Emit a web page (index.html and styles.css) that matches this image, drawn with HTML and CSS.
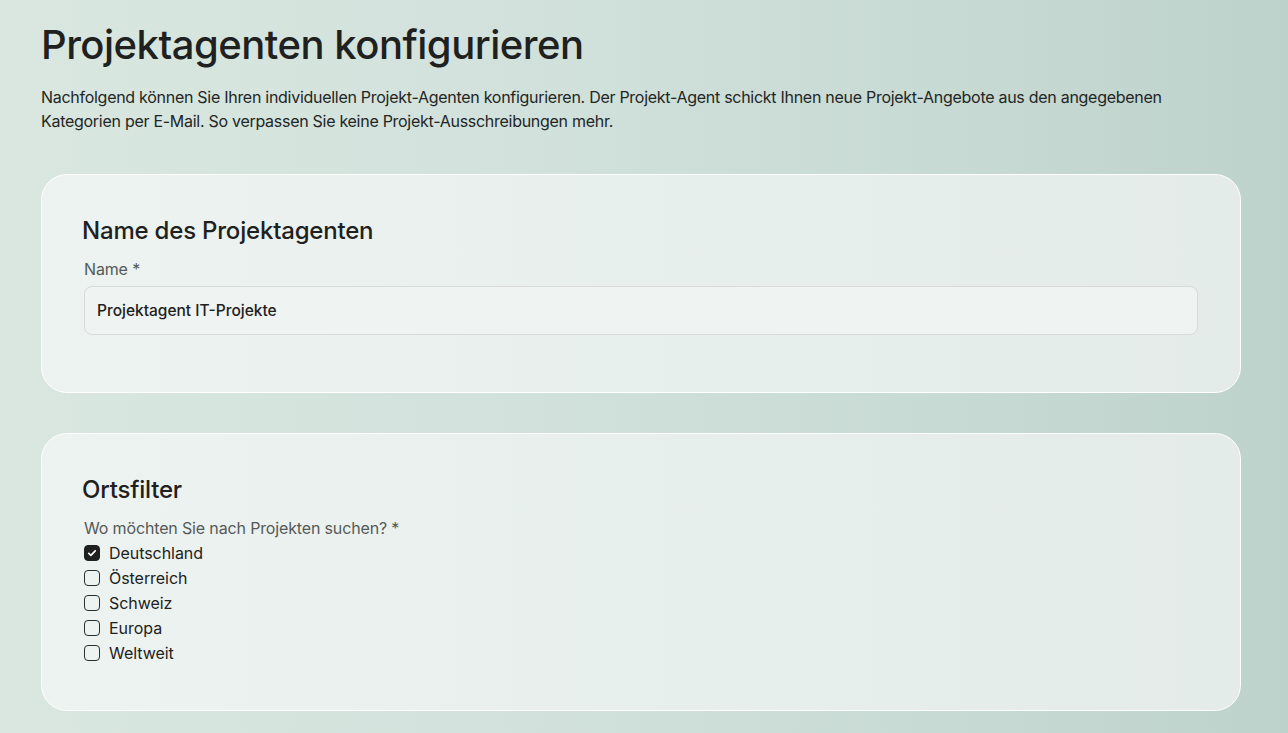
FILE: index.html
```html
<!DOCTYPE html>
<html lang="de">
<head>
<meta charset="utf-8">
<title>Projektagenten konfigurieren</title>
<link rel="stylesheet" href="styles.css">
</head>
<body>
<main class="page">
  <header class="intro">
    <h1 class="title">Projektagenten konfigurieren</h1>
    <p class="lead">Nachfolgend können Sie Ihren individuellen Projekt-Agenten konfigurieren. Der Projekt-Agent schickt Ihnen neue Projekt-Angebote aus den angegebenen Kategorien per E-Mail. So verpassen Sie keine Projekt-Ausschreibungen mehr.</p>
  </header>

  <section class="card card-name">
    <h2 class="card-title">Name des Projektagenten</h2>
    <label class="field-label" for="name">Name *</label>
    <input class="text-input" id="name" type="text" value="Projektagent IT-Projekte">
  </section>

  <section class="card card-place">
    <h2 class="card-title">Ortsfilter</h2>
    <div class="field-label">Wo möchten Sie nach Projekten suchen? *</div>
    <ul class="checks">
      <li class="check-row"><span class="box checked"><svg viewBox="0 0 16 16" width="16" height="16"><path d="M4.2 8.3l2.5 2.4 5-5.2" fill="none" stroke="#fff" stroke-width="1.9" stroke-linecap="round" stroke-linejoin="round"/></svg></span><span class="check-text">Deutschland</span></li>
      <li class="check-row"><span class="box"></span><span class="check-text">Österreich</span></li>
      <li class="check-row"><span class="box"></span><span class="check-text">Schweiz</span></li>
      <li class="check-row"><span class="box"></span><span class="check-text">Europa</span></li>
      <li class="check-row"><span class="box"></span><span class="check-text">Weltweit</span></li>
    </ul>
  </section>
</main>
</body>
</html>
```

FILE: styles.css
```css
* { box-sizing: border-box; }

html, body {
  margin: 0;
  padding: 0;
  height: 100%;
}

body {
  font-family: Inter, "Noto Sans", "Liberation Sans", sans-serif;
  color: #1f2321;
  background: linear-gradient(90deg, #dae7e1 0%, #d3e2dc 35%, #c9dbd5 70%, #bed2cc 100%);
  overflow: hidden;
}

.page {
  padding: 21px 48px 0 41px;
}

.intro {
  margin-bottom: 41px;
}

.title {
  margin: 0;
  font-size: 40px;
  line-height: 48px;
  font-weight: 500;
  letter-spacing: -0.5px;
  color: #1e2120;
}

.lead {
  margin: 16px 0 0;
  font-size: 16px;
  line-height: 24px;
  letter-spacing: -0.28px;
  color: #222624;
  max-width: 1160px;
}

.card {
  width: 1200px;
  background: linear-gradient(90deg, rgba(240,245,243,0.85) 0%, rgba(236,242,240,0.85) 50%, rgba(232,238,236,0.9) 100%);
  border: 1.5px solid #ffffff;
  border-radius: 26px;
  padding: 40px 42px 57px 42px;
  margin-bottom: 40px;
}

.card-place {
  padding-bottom: 45px;
}

.card-title {
  margin: 0 0 10px -2px;
  font-size: 24px;
  line-height: 32px;
  font-weight: 500;
  letter-spacing: -0.2px;
  color: #1e2120;
}

.field-label {
  display: block;
  font-size: 16px;
  line-height: 24px;
  letter-spacing: -0.15px;
  color: #555a58;
  margin-bottom: 5px;
}

.card-place .field-label {
  margin-bottom: 0;
}

.text-input {
  display: block;
  width: 100%;
  height: 49px;
  padding: 0 12px;
  font-family: inherit;
  font-size: 15.5px;
  font-weight: 500;
  letter-spacing: 0;
  color: #1e2120;
  background: #eff3f2;
  border: 1px solid #d6dbd9;
  border-radius: 8px;
  outline: none;
}

.checks {
  list-style: none;
  margin: 0;
  padding: 0;
}

.check-row {
  display: flex;
  align-items: center;
  gap: 9px;
  height: 25px;
}

.box {
  width: 16px;
  height: 16px;
  border: 1.5px solid #2b2e2d;
  border-radius: 4px;
  display: flex;
  align-items: center;
  justify-content: center;
  flex: none;
}

.box.checked {
  background: #1e2120;
  border-color: #1e2120;
}

.box svg {
  display: block;
}

.check-text {
  font-size: 16px;
  letter-spacing: -0.05px;
  color: #1e2120;
}
```
